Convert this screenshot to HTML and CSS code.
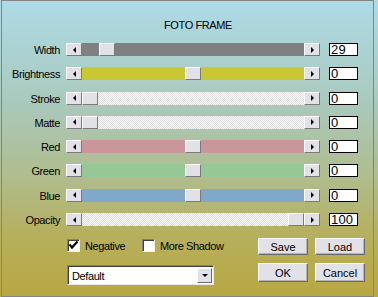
FILE: index.html
```html
<!DOCTYPE html>
<html lang="en">
<head>
  <meta charset="UTF-8" />
  <title>Foto Frame</title>
  <link rel="stylesheet" href="styles.css">
</head>
<body>
  <div class="frame">
    <div class="title">FOTO FRAME</div>

    <div class="rows">
      <div class="name">Width</div>
      <div class="bar"><span class="arrow"><i class="tri left"></i></span><div class="track t-gray"><span class="thumb" style="margin-left:17px"></span></div><span class="arrow"><i class="tri right"></i></span></div>
      <div class="value">29</div>

      <div class="name">Brightness</div>
      <div class="bar"><span class="arrow"><i class="tri left"></i></span><div class="track t-yellow"><span class="thumb" style="margin-left:103px"></span></div><span class="arrow"><i class="tri right"></i></span></div>
      <div class="value">0</div>

      <div class="name">Stroke</div>
      <div class="bar"><span class="arrow"><i class="tri left"></i></span><div class="track t-dither"><span class="thumb" style="margin-left:0"></span></div><span class="arrow"><i class="tri right"></i></span></div>
      <div class="value">0</div>

      <div class="name">Matte</div>
      <div class="bar"><span class="arrow"><i class="tri left"></i></span><div class="track t-dither"><span class="thumb" style="margin-left:0"></span></div><span class="arrow"><i class="tri right"></i></span></div>
      <div class="value">0</div>

      <div class="name">Red</div>
      <div class="bar"><span class="arrow"><i class="tri left"></i></span><div class="track t-red"><span class="thumb" style="margin-left:103px"></span></div><span class="arrow"><i class="tri right"></i></span></div>
      <div class="value">0</div>

      <div class="name">Green</div>
      <div class="bar"><span class="arrow"><i class="tri left"></i></span><div class="track t-green"><span class="thumb" style="margin-left:103px"></span></div><span class="arrow"><i class="tri right"></i></span></div>
      <div class="value">0</div>

      <div class="name">Blue</div>
      <div class="bar"><span class="arrow"><i class="tri left"></i></span><div class="track t-blue"><span class="thumb" style="margin-left:103px"></span></div><span class="arrow"><i class="tri right"></i></span></div>
      <div class="value">0</div>

      <div class="name">Opacity</div>
      <div class="bar"><span class="arrow"><i class="tri left"></i></span><div class="track t-dither"><span class="thumb" style="margin-left:206px"></span></div><span class="arrow"><i class="tri right"></i></span></div>
      <div class="value">100</div>
    </div>

    <div class="bottom">
      <div class="checks">
        <div class="check first">
          <span class="box"><svg width="11" height="11" viewBox="0 0 11 11"><path d="M1.5 4.5 L4 7.5 L9.5 1.5" fill="none" stroke="#000" stroke-width="2.2"/></svg></span>
          <span>Negative</span>
        </div>
        <div class="check">
          <span class="box"></span>
          <span>More Shadow</span>
        </div>
      </div>
      <button class="btn save">Save</button>
      <button class="btn load">Load</button>

      <div class="select">
        <span class="sel-text">Default</span>
        <span class="sel-btn"><i class="tri down"></i></span>
      </div>
      <button class="btn ok">OK</button>
      <button class="btn cancel">Cancel</button>
    </div>
  </div>
</body>
</html>
```

FILE: styles.css
```css
body {
  margin: 0;
  width: 378px;
  height: 297px;
  overflow: hidden;
  font-family: "Liberation Sans", Arial, sans-serif;
  font-size: 11px;
  letter-spacing: -0.4px;
  color: #000;
  background: linear-gradient(#aedbe7 0%, #a9c9bc 35%, #b0bc8c 60%, #b6af5c 80%, #b9a742 100%);
}

.frame {
  box-sizing: border-box;
  margin-left: 1px;
  width: 373px;
  height: 297px;
  border: 1px solid #858585;
  padding-top: 18px;
}

.title {
  line-height: 13px;
  text-align: center;
  padding-left: 21px;
}

/* slider rows */
.rows {
  margin-top: 11px;
  display: grid;
  grid-template-columns: 64px 263px 29px;
  grid-auto-rows: 13px;
  row-gap: 11.3px;
}

.name {
  text-align: right;
  padding-right: 6px;
  line-height: 15px;
}

.bar {
  display: flex;
  width: 254px;
  height: 13px;
}

.arrow,
.thumb {
  box-sizing: border-box;
  flex: none;
  width: 16px;
  height: 13px;
  background: #e2e1e8;
  border: 1px solid;
  border-color: #fff #7a7a7a #7a7a7a #fff;
}

.arrow {
  display: flex;
  align-items: center;
  justify-content: center;
}

.track {
  flex: 1;
  display: flex;
}

.t-gray { background: #808080; }
.t-yellow { background: #c8c832; }
.t-red { background: #c99699; }
.t-green { background: #96c896; }
.t-blue { background: #80a8c8; }
.t-dither {
  background: repeating-conic-gradient(#fdfdfd 0 25%, #dcdcdc 0 50%);
  background-size: 2px 2px;
}

.tri {
  display: block;
  width: 0;
  height: 0;
  border-style: solid;
}
.tri.left {
  border-width: 3px 3px 3px 0;
  border-color: transparent #000 transparent transparent;
}
.tri.right {
  border-width: 3px 0 3px 3px;
  border-color: transparent transparent transparent #000;
}
.tri.down {
  border-width: 3px 3px 0 3px;
  border-color: #000 transparent transparent transparent;
}

.value {
  box-sizing: border-box;
  height: 13px;
  background: #fff;
  border: 1px solid #000;
  font-size: 13px;
  line-height: 12px;
  padding-left: 1px;
  letter-spacing: 0.2px;
  overflow: hidden;
}

/* checkboxes, select and buttons */
.bottom {
  margin-top: 12px;
  display: grid;
  grid-template-columns: 65px 191px 50px 7px 50px;
  grid-template-rows: 17px 19px;
  row-gap: 8px;
}

.checks {
  grid-column: 2;
  display: flex;
  padding-top: 1px;
}

.check {
  display: flex;
  align-items: flex-start;
  gap: 5px;
  line-height: 14px;
}
.check.first { width: 75px; }

.box {
  box-sizing: border-box;
  width: 13px;
  height: 13px;
  background: #fff;
  border: 1px solid;
  border-color: #808080 #f0f0f0 #f0f0f0 #808080;
  box-shadow: inset 1px 1px 0 #404040;
  display: flex;
  align-items: center;
  justify-content: center;
}

.btn {
  box-sizing: border-box;
  margin: 0;
  padding: 0;
  font: inherit;
  color: #000;
  background: #e2e1e8;
  border: 1px solid;
  border-color: #fff #6a6a6a #6a6a6a #fff;
  box-shadow: inset -1px -1px 0 #b4b4b8;
}
.save { grid-column: 3; }
.load { grid-column: 5; }
.ok { grid-column: 3; grid-row: 2; }
.cancel { grid-column: 5; grid-row: 2; }

.select {
  grid-column: 2;
  grid-row: 2;
  box-sizing: border-box;
  width: 147px;
  height: 20px;
  margin-top: 2px;
  background: #fff;
  border: 1px solid;
  border-color: #808080 #e8e8e8 #e8e8e8 #808080;
  box-shadow: inset 1px 1px 0 #404040;
  display: flex;
  align-items: center;
  justify-content: space-between;
  padding: 1px 1px 0 4px;
}

.sel-btn {
  box-sizing: border-box;
  width: 15px;
  height: 15px;
  background: #e2e1e8;
  border: 1px solid;
  border-color: #fff #6a6a6a #6a6a6a #fff;
  display: flex;
  align-items: center;
  justify-content: center;
}
```
